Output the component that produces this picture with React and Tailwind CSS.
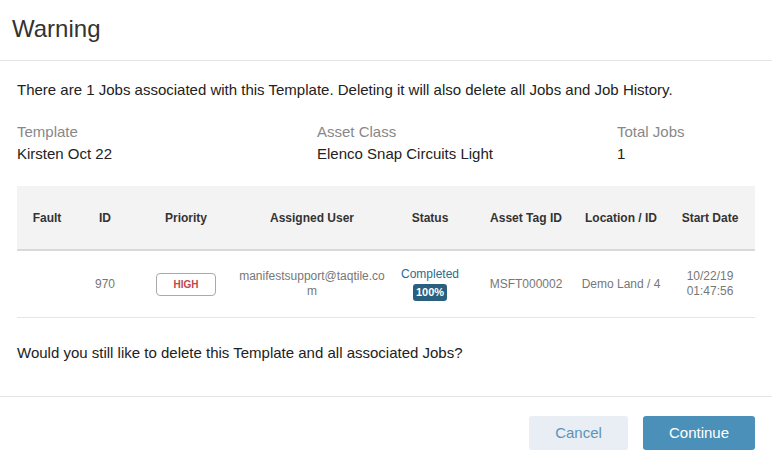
import React from "react";

export default function App() {
  // Columns of the jobs table
  const columns = [
    { label: "Fault", w: "w-[60px]" },
    { label: "ID", w: "w-[56px]" },
    { label: "Priority", w: "w-[106px]" },
    { label: "Assigned User", w: "w-[146px]" },
    { label: "Status", w: "w-[90px]" },
    { label: "Asset Tag ID", w: "w-[102px]" },
    { label: "Location / ID", w: "w-[88px]" },
    { label: "Start Date", w: "w-[90px]" },
  ];

  return (
    <div className="w-[772px] h-[468px] bg-white font-['Liberation_Sans',Arial,sans-serif] text-[#333] flex flex-col">
      {/* Header */}
      <div className="h-[61px] border-b border-[#e5e5e5] px-3 flex items-center">
        <h1 className="text-[24px] text-[#333] leading-none pb-[3px]">Warning</h1>
      </div>

      {/* Body */}
      <div className="px-[17px] pt-[19px] flex-1">
        <p className="text-[15px] text-[#222] leading-[20px]">
          There are 1 Jobs associated with this Template. Deleting it will also delete all Jobs and Job History.
        </p>

        <div className="grid grid-cols-[300px_300px_1fr] mt-[22px] text-[15px] leading-[20px]">
          <div>
            <div className="text-[#888]">Template</div>
            <div className="text-[#222] mt-[2px]">Kirsten Oct 22</div>
          </div>
          <div>
            <div className="text-[#888]">Asset Class</div>
            <div className="text-[#222] mt-[2px]">Elenco Snap Circuits Light</div>
          </div>
          <div>
            <div className="text-[#888]">Total Jobs</div>
            <div className="text-[#222] mt-[2px]">1</div>
          </div>
        </div>

        {/* Table */}
        <div className="mt-[22px] w-[738px]">
          <div className="flex h-[65px] bg-[#f3f3f3] border-b-2 border-[#d9d9d9]">
            {columns.map((c) => (
              <div key={c.label} className={`${c.w} flex items-center justify-center text-[12px] font-bold text-[#333]`}>
                {c.label}
              </div>
            ))}
          </div>
          <div className="flex h-[67px] border-b border-[#e5e5e5] text-[12px] text-[#777] leading-[15px]">
            <div className="w-[60px]" />
            <div className="w-[56px] flex items-center justify-center">970</div>
            <div className="w-[106px] flex items-center justify-center">
              <span className="w-[60px] h-[23px] border border-[#aaa] rounded-[4px] flex items-center justify-center text-[10px] font-bold text-[#c0464b]">
                HIGH
              </span>
            </div>
            <div className="w-[146px] flex items-center justify-center text-center break-all">
              manifestsupport@taqtile.com
            </div>
            <div className="w-[90px] flex flex-col items-center justify-center">
              <span className="text-[#2d6b90]">Completed</span>
              <span className="mt-[2px] bg-[#2a5f7d] text-white text-[11px] font-bold px-[3px] h-[17px] leading-[17px] rounded-[3px]">
                100%
              </span>
            </div>
            <div className="w-[102px] flex items-center justify-center">MSFT000002</div>
            <div className="w-[88px] flex items-center justify-center">Demo Land / 4</div>
            <div className="w-[90px] flex items-center justify-center text-center">
              10/22/19
              <br />
              01:47:56
            </div>
          </div>
        </div>

        <p className="mt-[25px] text-[15px] text-[#222] leading-[20px]">
          Would you still like to delete this Template and all associated Jobs?
        </p>
      </div>

      {/* Footer */}
      <div className="h-[72px] border-t border-[#e5e5e5] flex items-start justify-end gap-[15px] px-[17px] pt-[19px]">
        <button className="w-[99px] h-[34px] rounded-[3px] bg-[#e8eef3] text-[#5d93b8] text-[15px]">Cancel</button>
        <button className="w-[112px] h-[34px] rounded-[3px] bg-[#4a90b8] text-white text-[15px]">Continue</button>
      </div>
    </div>
  );
}
